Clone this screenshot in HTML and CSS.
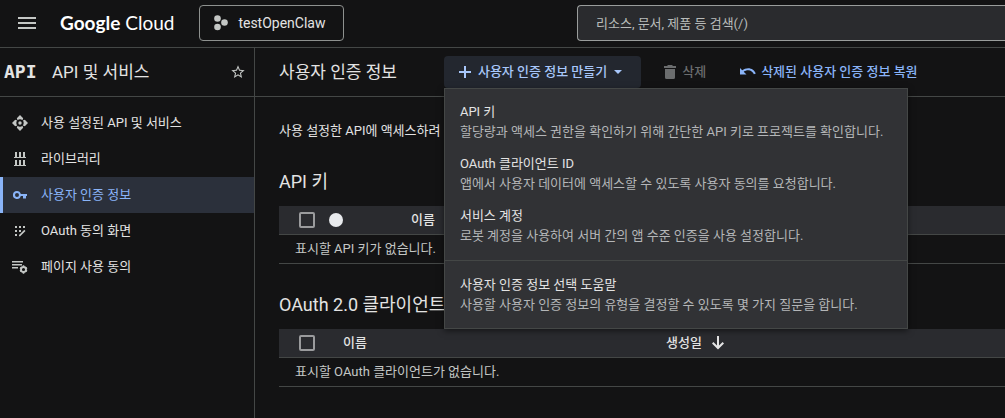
FILE: index.html
```html
<!DOCTYPE html>
<html lang="ko">
<head>
  <meta charset="UTF-8">
  <meta name="viewport" content="width=device-width, initial-scale=1">
  <title>사용자 인증 정보 - API 및 서비스</title>
  <link rel="stylesheet" href="styles.css">
</head>
<body>
  <header class="topbar">
    <div class="topbar-left">
      <button type="button" class="icon-btn" aria-label="탐색 메뉴">
        <svg width="18" height="12" viewBox="0 0 18 12"><path d="M0 0h18v2H0zM0 5h18v2H0zM0 10h18v2H0z"/></svg>
      </button>
      <a href="#" class="logo"><span class="logo-google">Google</span> Cloud</a>
      <button type="button" class="project-btn">
        <svg width="14" height="16" viewBox="0 0 14 16"><circle cx="3.5" cy="3.5" r="3.3"/><circle cx="10.5" cy="7.5" r="3.3"/><circle cx="3.5" cy="12" r="3.3"/></svg>
        testOpenClaw
      </button>
    </div>
    <input type="search" class="search" placeholder="리소스, 문서, 제품 등 검색(/)" aria-label="검색">
  </header>

  <div class="layout">
    <aside class="sidebar">
      <div class="sidebar-head">
        <span class="api-mark" aria-hidden="true">API</span>
        <span class="sidebar-title">API 및 서비스</span>
        <button type="button" class="icon-btn" aria-label="고정">
          <svg width="16" height="16" viewBox="0 0 24 24"><path d="M22 9.24l-7.19-.62L12 2 9.19 8.63 2 9.24l5.46 4.73L5.82 21 12 17.27 18.18 21l-1.63-7.03L22 9.24zM12 15.4l-3.76 2.27 1-4.28-3.32-2.88 4.38-.38L12 6.1l1.71 4.04 4.38.38-3.32 2.88 1 4.28L12 15.4z"/></svg>
        </button>
      </div>
      <nav class="side-nav">
        <a href="#" class="nav-item">
          <svg width="16" height="16" viewBox="0 0 16 16">
            <path id="wedge" d="M8 0l3.200 3.200-.8 2A3.800 3.800 0 0 0 8 4.300a3.800 3.800 0 0 0-2.400.9l-.8-2z"/>
            <use href="#wedge" transform="rotate(90 8 8)"/>
            <use href="#wedge" transform="rotate(180 8 8)"/>
            <use href="#wedge" transform="rotate(270 8 8)"/>
            <circle cx="8" cy="8" r="1.700"/>
          </svg>
          사용 설정된 API 및 서비스
        </a>
        <a href="#" class="nav-item">
          <svg width="16" height="16" viewBox="0 0 16 16"><path d="M3 1h2v5H3zM7 1h2v5H7zM11 1h2v5h-2zM2 6h12v1H2zM3 9h2v5H3zM7 9h2v5H7zM11 9h2v5h-2zM2 14h12v1H2z"/></svg>
          라이브러리
        </a>
        <a href="#" class="nav-item active" aria-current="page">
          <svg width="16" height="16" viewBox="0 0 16 16"><path fill-rule="evenodd" d="M5 4a4 4 0 1 0 3.800 5H11v2.500h3V9h1V7H8.800A4 4 0 0 0 5 4zm0 2a2 2 0 1 1 0 4 2 2 0 0 1 0-4z"/></svg>
          사용자 인증 정보
        </a>
        <a href="#" class="nav-item">
          <svg width="16" height="16" viewBox="0 0 16 16"><path d="M3 3h2v2H3zM7 3h2v2H7zM11 3h2v2h-2zM3 7h2v2H3zM7 7h2v2H7zM3 11h2v2H3zM12.300 6.700l1.200 1.200-5.300 5.300H7V12z"/></svg>
          OAuth 동의 화면
        </a>
        <a href="#" class="nav-item">
          <svg width="16" height="16" viewBox="0 0 16 16"><path d="M0 2h11v1.500H0zM0 5h10v1.500H0zM0 8h6v1.500H0z"/><circle cx="11.500" cy="10.500" r="2.500" fill="none" stroke="currentColor" stroke-width="1.800"/><path d="M10.700 6.300h1.600v1.800h-1.600zM10.700 12.900h1.600v1.800h-1.600zM14.600 8l.8 1.400-1.600.9-.8-1.400zM8.400 8l-.8 1.400 1.600.9.8-1.400zM14.600 13l.8-1.400-1.600-.9-.8 1.400zM8.400 13l-.8-1.400 1.600-.9.8 1.400z"/></svg>
          페이지 사용 동의
        </a>
      </nav>
    </aside>

    <main class="main">
      <div class="page-head">
        <h1>사용자 인증 정보</h1>
        <div class="create">
          <button type="button" class="action create-btn" aria-haspopup="true" aria-expanded="true">
            <svg width="12" height="12" viewBox="0 0 12 12"><path d="M5 0h2v5h5v2H7v5H5V7H0V5h5z"/></svg>
            사용자 인증 정보 만들기
            <svg width="8" height="4" viewBox="0 0 8 4"><path d="M0 0h8L4 4z"/></svg>
          </button>
          <ul class="menu">
            <li><a href="#"><strong>API 키</strong><span>할당량과 액세스 권한을 확인하기 위해 간단한 API 키로 프로젝트를 확인합니다.</span></a></li>
            <li><a href="#"><strong>OAuth 클라이언트 ID</strong><span>앱에서 사용자 데이터에 액세스할 수 있도록 사용자 동의를 요청합니다.</span></a></li>
            <li><a href="#"><strong>서비스 계정</strong><span>로봇 계정을 사용하여 서버 간의 앱 수준 인증을 사용 설정합니다.</span></a></li>
            <li class="menu-help"><a href="#"><strong>사용자 인증 정보 선택 도움말</strong><span>사용할 사용자 인증 정보의 유형을 결정할 수 있도록 몇 가지 질문을 합니다.</span></a></li>
          </ul>
        </div>
        <button type="button" class="action delete-btn" disabled>
          <svg width="12" height="14" viewBox="0 0 12 14"><path d="M4 0h4l1 1h3v2H0V1h3zM1 4h10v8.500a1.500 1.500 0 0 1-1.500 1.500h-7A1.500 1.500 0 0 1 1 12.500z"/></svg>
          삭제
        </button>
        <button type="button" class="action restore-btn">
          <svg width="16" height="8" viewBox="0 0 16 8"><path d="M0 0l2.200 2.200C3.900.9 6 .2 8.200.2c3.500 0 6.500 2.200 7.600 5.400l-1.900.7C13 3.900 10.800 2.200 8.200 2.200c-1.700 0-3.200.5-4.500 1.500L6.500 6.500H0z"/></svg>
          삭제된 사용자 인증 정보 복원
        </button>
      </div>

      <div class="content">
        <p>사용 설정한 API에 액세스하려</p>

        <h2>API 키</h2>
        <table>
          <thead>
            <tr>
              <th class="col-check"><input type="checkbox" aria-label="모든 API 키 선택"></th>
              <th class="col-status"><span class="dot"></span></th>
              <th>이름</th>
            </tr>
          </thead>
          <tbody>
            <tr><td colspan="3">표시할 API 키가 없습니다.</td></tr>
          </tbody>
        </table>

        <h2>OAuth 2.0 클라이언트</h2>
        <table>
          <thead>
            <tr>
              <th class="col-check"><input type="checkbox" aria-label="모든 클라이언트 선택"></th>
              <th class="col-name">이름</th>
              <th>
                <span class="sort">생성일
                  <svg width="12" height="14" viewBox="0 0 12 14"><path d="M5 0h2v9.600l3.600-3.500L12 7.500l-6 6-6-6 1.400-1.400L5 9.600z"/></svg>
                </span>
              </th>
            </tr>
          </thead>
          <tbody>
            <tr><td colspan="3">표시할 OAuth 클라이언트가 없습니다.</td></tr>
          </tbody>
        </table>
      </div>
    </main>
  </div>
</body>
</html>
```

FILE: styles.css
```css
* {
  box-sizing: border-box;
}
body {
  margin: 0;
  min-height: 100vh;
  display: flex;
  flex-direction: column;
  background-color: #131314;
  color: #e3e3e3;
  font-family: Roboto, "Noto Sans CJK KR", sans-serif;
  font-size: 13px;
  line-height: 20px;
}
button, input {
  font: inherit;
  color: inherit;
}
button {
  background: none;
  border: none;
  padding: 0;
  cursor: pointer;
}
a {
  color: inherit;
  text-decoration: none;
}
svg {
  display: block;
  flex: none;
  fill: currentColor;
}
.icon-btn {
  color: #c4c7c5;
}

/* top bar */
.topbar {
  display: grid;
  grid-template-columns: 577px minmax(0, 1fr);
  padding: 5px 0 6px;
  border-bottom: 1px solid #444746;
}
.topbar-left {
  display: flex;
  align-items: center;
  padding-left: 18px;
}
.logo {
  margin: 0 25px 0 24px;
  color: #fff;
  font-family: Lato, sans-serif;
  font-size: 19px;
  white-space: nowrap;
}
.logo-google {
  font-weight: 700;
}
.project-btn {
  display: flex;
  align-items: center;
  gap: 10px;
  height: 36px;
  padding: 0 17px 0 14px;
  border: 1px solid #8e918f;
  border-radius: 4px;
  font-size: 14px;
}
.project-btn svg {
  color: #c4c7c5;
}
.search {
  width: 100%;
  height: 36px;
  padding: 0 18px;
  background-color: #2a2b2e;
  border: 1px solid #9a9d9c;
  border-right: none;
  border-radius: 4px 0 0 4px;
}
.search::placeholder {
  color: #b8bbba;
  opacity: 1;
}

/* sidebar */
.layout {
  flex: 1;
  display: flex;
}
.sidebar {
  flex: none;
  width: 255px;
  border-right: 1px solid #444746;
}
.sidebar-head {
  display: flex;
  align-items: center;
  height: 49px;
  padding: 0 8px 0 4px;
  border-bottom: 1px solid #444746;
}
.api-mark {
  width: 48px;
  font-family: "DejaVu Sans Mono", monospace;
  font-size: 18px;
  font-weight: bold;
}
.sidebar-title {
  flex: 1;
  font-size: 17px;
}
.side-nav {
  padding-top: 8px;
}
.nav-item {
  display: flex;
  align-items: center;
  gap: 13px;
  height: 36px;
  padding-left: 9px;
  border-left: 3px solid transparent;
}
.nav-item svg {
  color: #c4c7c5;
}
.nav-item.active,
.nav-item.active svg {
  color: #8ab4f8;
}
.nav-item.active {
  background-color: #2b303b;
  border-left-color: #8ab4f8;
}

/* page header and actions */
.main {
  flex: 1;
  min-width: 0;
}
.page-head {
  display: flex;
  align-items: center;
  height: 49px;
  padding-left: 24px;
  border-bottom: 1px solid #444746;
  white-space: nowrap;
}
h1 {
  margin: 0 47px 0 0;
  font-size: 17px;
  font-weight: 400;
}
h2 {
  margin: 28px 0 12px;
  font-size: 18px;
  font-weight: 400;
  line-height: 25px;
}
.action {
  display: flex;
  align-items: center;
  gap: 6px;
  height: 32px;
  color: #a8c7fa;
  font-weight: 500;
}
.create {
  position: relative;
}
.create-btn {
  gap: 7px;
  padding: 0 19px 0 15px;
  background-color: #23272f;
  border-radius: 4px;
}
.delete-btn {
  margin: 0 34px 0 23px;
  color: #6b6d6e;
}
.restore-btn {
  gap: 5px;
  color: #8ab4f8;
}

/* create menu */
.menu {
  position: absolute;
  top: 100%;
  left: 0;
  z-index: 1;
  min-width: 464px;
  margin: 0;
  padding: 7px 0;
  list-style: none;
  background-color: #313235;
  border: 1px solid #444746;
  box-shadow: 0 2px 6px rgba(0, 0, 0, 0.5);
}
.menu a {
  display: block;
  padding: 6px 15px;
}
.menu strong,
.menu span {
  display: block;
  font-weight: 400;
}
.menu span {
  color: #b4b6b8;
}
.menu-help {
  margin-top: 8px;
  padding-top: 8px;
  border-top: 1px solid #444746;
}

/* tables */
.content {
  padding: 24px 0 24px 24px;
}
.content p {
  margin: 0;
}
table {
  width: 100%;
  table-layout: fixed;
  border-collapse: separate;
  border-spacing: 0;
}
th, td {
  height: 29px;
  padding: 0 16px;
  border-bottom: 1px solid #444746;
  text-align: left;
}
th {
  background-color: #2a2b2f;
  font-weight: 500;
}
td {
  color: #c4c7c5;
}
.col-check {
  width: 48px;
  padding: 0 0 0 20px;
}
.col-status {
  width: 68px;
  padding: 0 2px;
}
.col-name {
  width: 323px;
}
input[type="checkbox"] {
  appearance: none;
  display: block;
  width: 16px;
  height: 16px;
  margin: 0;
  border: 2px solid #9a9b9d;
  border-radius: 2px;
}
.dot {
  display: block;
  width: 14px;
  height: 14px;
  border-radius: 50%;
  background-color: #e8eaed;
}
.sort {
  display: flex;
  align-items: center;
  gap: 10px;
}
```
